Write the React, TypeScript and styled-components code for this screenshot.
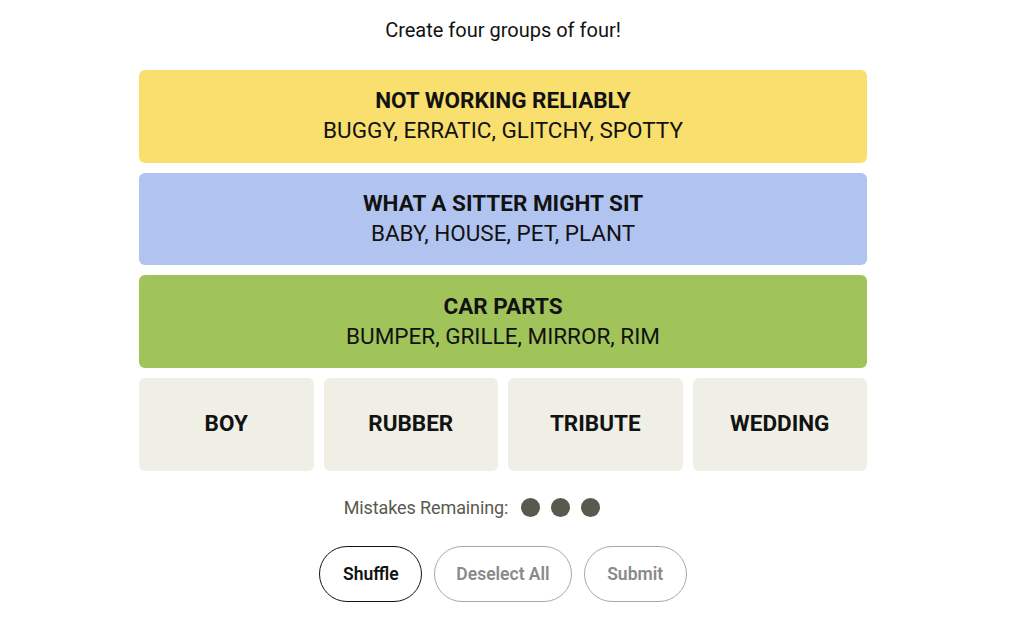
import React from 'react';
import styled, { createGlobalStyle } from 'styled-components';

const GlobalStyle = createGlobalStyle`
  html, body {
    margin: 0;
    padding: 0;
    background: #ffffff;
  }
  body {
    font-family: Roboto, "Liberation Sans", sans-serif;
    color: #121212;
  }
`;

const solved = [
  { title: 'NOT WORKING RELIABLY', members: 'BUGGY, ERRATIC, GLITCHY, SPOTTY', color: '#f9df6d' },
  { title: 'WHAT A SITTER MIGHT SIT', members: 'BABY, HOUSE, PET, PLANT', color: '#b0c4ef' },
  { title: 'CAR PARTS', members: 'BUMPER, GRILLE, MIRROR, RIM', color: '#a0c35a' },
];

const words = ['BOY', 'RUBBER', 'TRIBUTE', 'WEDDING'];

function App() {
  return (
    <Page>
      <GlobalStyle />
      <Prompt>Create four groups of four!</Prompt>

      <Board>
        {solved.map((group) => (
          <SolvedRow key={group.title} $color={group.color}>
            <GroupTitle>{group.title}</GroupTitle>
            <GroupMembers>{group.members}</GroupMembers>
          </SolvedRow>
        ))}
        <TileRow>
          {words.map((word) => (
            <Tile key={word}>{word}</Tile>
          ))}
        </TileRow>
      </Board>

      <Mistakes>
        <MistakesLabel>Mistakes Remaining:</MistakesLabel>
        <Dots>
          <Dot />
          <Dot />
          <Dot />
        </Dots>
      </Mistakes>

      <Controls>
        <PillButton $active>Shuffle</PillButton>
        <PillButton>Deselect All</PillButton>
        <PillButton>Submit</PillButton>
      </Controls>
    </Page>
  );
}

const Page = styled.main`
  width: 1006px;
  display: flex;
  flex-direction: column;
  align-items: center;
  padding-top: 17px;
`;

const Prompt = styled.h1`
  margin: 0;
  font-size: 20px;
  font-weight: 400;
  line-height: 26px;
  color: #121212;
`;

const Board = styled.div`
  width: 728px;
  margin-top: 27px;
  display: flex;
  flex-direction: column;
  gap: 10px;
`;

const SolvedRow = styled.div<{ $color: string }>`
  height: 92.7px;
  padding-bottom: 2px;
  box-sizing: border-box;
  border-radius: 6px;
  background: ${(p) => p.$color};
  display: flex;
  flex-direction: column;
  align-items: center;
  justify-content: center;
  color: #121212;
`;

const GroupTitle = styled.div`
  font-size: 22.5px;
  font-weight: 700;
  line-height: 30px;
`;

const GroupMembers = styled.div`
  font-size: 22.5px;
  font-weight: 400;
  line-height: 30px;
`;

const TileRow = styled.div`
  display: grid;
  grid-template-columns: repeat(4, 1fr);
  gap: 10px;
`;

const Tile = styled.div`
  height: 92.7px;
  padding-bottom: 2px;
  box-sizing: border-box;
  border-radius: 6px;
  background: #efefe6;
  display: flex;
  align-items: center;
  justify-content: center;
  font-size: 22.5px;
  font-weight: 700;
  color: #121212;
`;

const Mistakes = styled.div`
  margin-top: 26px;
  height: 22px;
  display: flex;
  align-items: center;
  gap: 13px;
  padding-right: 62px;
`;

const MistakesLabel = styled.span`
  font-size: 18px;
  font-weight: 400;
  color: #5a594e;
  letter-spacing: -0.1px;
`;

const Dots = styled.div`
  display: flex;
  gap: 11px;
`;

const Dot = styled.span`
  width: 19px;
  height: 19px;
  border-radius: 50%;
  background: #5a594e;
`;

const Controls = styled.div`
  margin-top: 27px;
  display: flex;
  gap: 12px;
`;

const PillButton = styled.button<{ $active?: boolean }>`
  height: 56px;
  min-width: 103px;
  padding: 0 21px;
  border-radius: 28px;
  background: #ffffff;
  border: 1px solid ${(p) => (p.$active ? '#121212' : '#a8a8a8')};
  color: ${(p) => (p.$active ? '#121212' : '#8a8a8a')};
  font-family: Roboto, "Liberation Sans", sans-serif;
  font-size: 17.5px;
  font-weight: 600;
  cursor: pointer;
`;

export default App;
